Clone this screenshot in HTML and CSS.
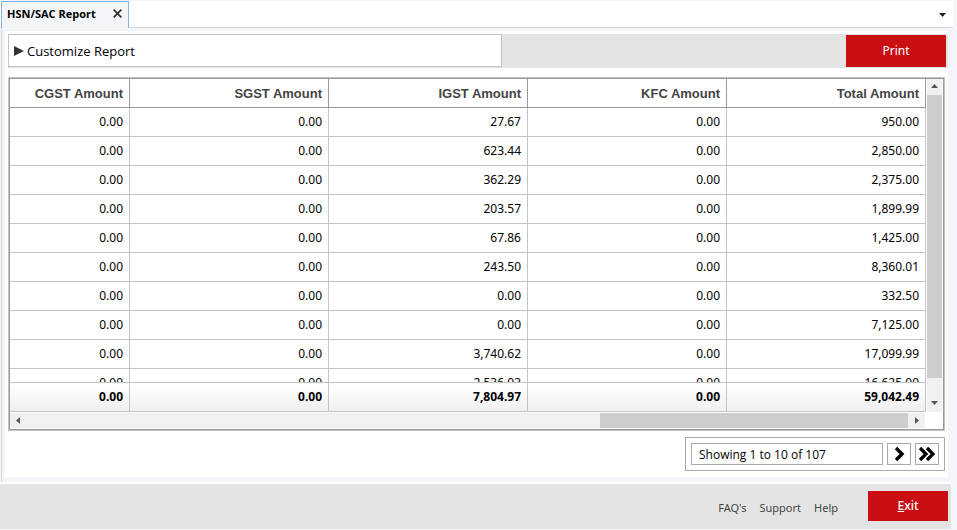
FILE: index.html
```html
<!DOCTYPE html>
<html lang="en">
<head>
    <meta charset="UTF-8">
    <meta name="viewport" content="width=device-width, initial-scale=1.0">
    <title>HSN/SAC Report</title>
    <link rel="stylesheet" href="styles.css">
</head>
<body>

    <!-- Tabs -->
    <header class="tab-bar">
        <div class="tab">
            <span class="tab-title">HSN/SAC Report</span>
            <button type="button" class="tab-close" aria-label="Close">
                <svg width="9" height="9" viewBox="0 0 9 9"><path d="M0.7 0.7L8.3 8.3M8.3 0.7L0.7 8.3" stroke="#333" stroke-width="1.8"/></svg>
            </button>
        </div>
        <button type="button" class="tab-menu" aria-label="Tab list">
            <svg width="7" height="4" viewBox="0 0 7 4"><path d="M0 0H7L3.5 4Z" fill="#1e1e1e"/></svg>
        </button>
    </header>

    <main class="frame">
        <div class="page">
            <div class="toolbar">
                <button type="button" class="customize">
                    <svg width="10" height="10" viewBox="0 0 10 10"><path d="M0 0L10 5L0 10Z" fill="#333"/></svg>
                    Customize Report
                </button>
                <button type="button" class="print">Print</button>
            </div>

            <!-- Report grid -->
            <div class="grid">
                <div class="grid-main">
                    <div class="grid-tables">
                        <div class="grid-rows">
                            <table>
                                <colgroup><col class="col-first"><col><col><col><col></colgroup>
                                <thead>
                                    <tr><th>CGST Amount</th><th>SGST Amount</th><th>IGST Amount</th><th>KFC Amount</th><th>Total Amount</th></tr>
                                </thead>
                                <tbody>
                                    <tr><td>0.00</td><td>0.00</td><td>27.67</td><td>0.00</td><td>950.00</td></tr>
                                    <tr><td>0.00</td><td>0.00</td><td>623.44</td><td>0.00</td><td>2,850.00</td></tr>
                                    <tr><td>0.00</td><td>0.00</td><td>362.29</td><td>0.00</td><td>2,375.00</td></tr>
                                    <tr><td>0.00</td><td>0.00</td><td>203.57</td><td>0.00</td><td>1,899.99</td></tr>
                                    <tr><td>0.00</td><td>0.00</td><td>67.86</td><td>0.00</td><td>1,425.00</td></tr>
                                    <tr><td>0.00</td><td>0.00</td><td>243.50</td><td>0.00</td><td>8,360.01</td></tr>
                                    <tr><td>0.00</td><td>0.00</td><td>0.00</td><td>0.00</td><td>332.50</td></tr>
                                    <tr><td>0.00</td><td>0.00</td><td>0.00</td><td>0.00</td><td>7,125.00</td></tr>
                                    <tr><td>0.00</td><td>0.00</td><td>3,740.62</td><td>0.00</td><td>17,099.99</td></tr>
                                    <tr><td>0.00</td><td>0.00</td><td>2,536.03</td><td>0.00</td><td>16,625.00</td></tr>
                                </tbody>
                            </table>
                        </div>
                        <table class="totals">
                            <colgroup><col class="col-first"><col><col><col><col></colgroup>
                            <tbody>
                                <tr><td>0.00</td><td>0.00</td><td>7,804.97</td><td>0.00</td><td>59,042.49</td></tr>
                            </tbody>
                        </table>
                    </div>
                    <div class="scroll scroll-v">
                        <svg class="arrow" width="15" height="16" viewBox="0 0 15 16"><path d="M4 9H11L7.5 5Z" fill="#555"/></svg>
                        <div class="thumb"></div>
                        <svg class="arrow-end" width="15" height="17" viewBox="0 0 15 17"><path d="M4 6H11L7.5 10Z" fill="#555"/></svg>
                    </div>
                </div>
                <div class="scroll scroll-h">
                    <svg class="arrow" width="17" height="15" viewBox="0 0 17 15"><path d="M10 4V11L6 7.5Z" fill="#555"/></svg>
                    <div class="thumb"></div>
                    <svg class="arrow-end" width="17" height="15" viewBox="0 0 17 15"><path d="M7 4V11L11 7.5Z" fill="#555"/></svg>
                </div>
            </div>

            <!-- Paging -->
            <div class="pager">
                <input type="text" class="pager-info" value="Showing 1 to 10 of 107" aria-label="Records" readonly>
                <button type="button" aria-label="Next page">
                    <svg width="18" height="16" viewBox="0 0 18 16"><path d="M6 2L12 8L6 14" fill="none" stroke="#000" stroke-width="3.4"/></svg>
                </button>
                <button type="button" aria-label="Last page">
                    <svg width="18" height="16" viewBox="0 0 18 16"><path d="M2 2L8 8L2 14M9 2L15 8L9 14" fill="none" stroke="#000" stroke-width="3.2"/></svg>
                </button>
            </div>
        </div>
    </main>

    <footer class="footer">
        <nav class="links">
            <a href="#">FAQ's</a>
            <a href="#">Support</a>
            <a href="#">Help</a>
        </nav>
        <button type="button" class="exit"><u>E</u>xit</button>
    </footer>

</body>
</html>
```
FILE: styles.css
```css
* {
    box-sizing: border-box;
}

body {
    margin: 0;
    padding-right: 4px;
    background-color: #f3f5f8;
    font-family: "Noto Sans", "Open Sans", sans-serif;
    font-size: 12px;
    color: #000;
}

button {
    margin: 0;
    padding: 0;
    border: none;
    background: none;
    font-family: inherit;
    font-size: 12px;
    color: inherit;
    cursor: pointer;
}

svg {
    display: block;
}

/* Tabs */
.tab-bar {
    display: flex;
    align-items: center;
    justify-content: space-between;
    height: 28px;
    padding: 0 7px 0 1px;
    border-top: 1px solid #f3f5f8;
    background-color: #fff;
    box-shadow: inset 0 -1px #d5d8dd;
}

.tab {
    display: flex;
    align-items: center;
    justify-content: space-between;
    width: 128px;
    height: 27px;
    padding: 0 6px 4px 5px;
    border: 1px solid #7eb4ea;
    border-bottom: none;
    background-color: #f3f5f8;
}

.tab-title {
    font-family: "Open Sans", sans-serif;
    font-size: 11px;
    font-weight: bold;
}

/* Page frame */
.frame {
    margin-left: 1px;
    padding: 3px 5px 5px 3px;
    border-left: 1px solid #d5d8dd;
}

.page {
    padding: 3px 0 6px 3px;
    background-color: #fff;
}

.toolbar {
    display: flex;
    justify-content: space-between;
    height: 34px;
    padding: 0 2px 1px 0;
    background-color: #e4e4e4;
}

.customize {
    display: flex;
    align-items: center;
    gap: 3px;
    width: 494px;
    padding-left: 5px;
    border: 1px solid #c3c3c3;
    background-color: #fff;
    font-family: "Open Sans", sans-serif;
    font-size: 13px;
}

.print {
    width: 100px;
    margin-top: 1px;
    padding-bottom: 2px;
    background-color: #c90e14;
    color: #fff;
}

/* Report grid */
.grid {
    margin: 9px 3px 0 0;
    border: 1px solid #c3c3c3;
    box-shadow: inset 0 0 0 1px #999;
    padding: 1px 1px 2px;
}

.grid-main {
    display: flex;
    gap: 1px;
}

.grid-tables {
    flex: 1;
}

.grid-rows {
    height: 303px;
    overflow: hidden;
}

table {
    width: 100%;
    table-layout: fixed;
    border-collapse: separate;
    border-spacing: 0;
}

.col-first {
    width: 120px;
}

th,
td {
    height: 29px;
    padding: 0 6px 2px 0;
    border-right: 1px solid #c3c3c3;
    border-bottom: 1px solid #c3c3c3;
    text-align: right;
}

th {
    padding-bottom: 0;
    border-color: #999;
    color: #444;
    font-family: "Liberation Sans", Arial, sans-serif;
    font-size: 13px;
}

.totals td {
    height: 30px;
    border-top: 1px solid #c3c3c3;
    background-image: linear-gradient(#fff, #f0f0f0);
    font-weight: bold;
}

.scroll {
    display: flex;
    background-color: #f0f0f0;
}

.thumb {
    background-color: #cdcdcd;
}

.arrow-end {
    margin-top: auto;
    margin-left: auto;
}

.scroll-v {
    flex-direction: column;
    width: 15px;
    margin-right: 1px;
}

.scroll-v .thumb {
    height: 283px;
}

.scroll-h {
    height: 15px;
    margin: 1px 18px 0 0;
}

.scroll-h .thumb {
    width: 308px;
    margin-left: auto;
}

.scroll-h .arrow-end {
    margin: 0;
}

/* Paging */
.pager {
    display: flex;
    gap: 4px;
    width: 260px;
    margin: 6px 3px 0 auto;
    padding: 5px;
    border: 1px solid #aaa;
}

.pager-info {
    flex: 1;
    min-width: 0;
    height: 22px;
    padding: 0 7px;
    border: 1px solid #aaa;
    background-color: #fff;
    font-family: "Open Sans", sans-serif;
    font-size: 12px;
}

.pager button {
    display: flex;
    align-items: center;
    justify-content: center;
    width: 24px;
    height: 22px;
    border: 1px solid #aaa;
}

/* Footer */
.footer {
    display: flex;
    align-items: center;
    justify-content: flex-end;
    gap: 30px;
    height: 47px;
    margin-right: 2px;
    padding: 0 3px 2px;
    border-top: 2px solid #fff;
    background-color: #e4e4e4;
}

.links {
    display: flex;
    gap: 13px;
    padding-top: 4px;
}

.links a {
    color: #444;
    font-size: 11px;
    text-decoration: none;
}

.exit {
    width: 80px;
    height: 30px;
    background-color: #c90e14;
    color: #fff;
    font-weight: 500;
}
```
